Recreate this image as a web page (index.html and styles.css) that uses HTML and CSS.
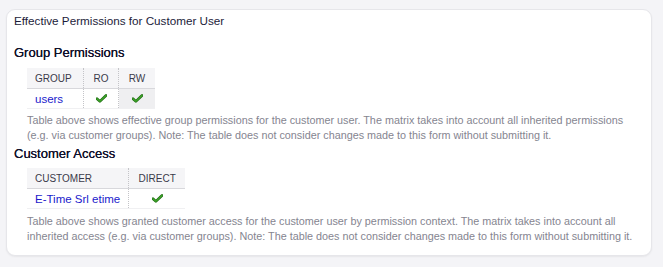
FILE: index.html
```html
<!DOCTYPE html>
<html>
<head>
<meta charset="utf-8">
<link rel="stylesheet" href="styles.css">
</head>
<body>
<div class="card">
  <div class="title">Effective Permissions for Customer User</div>
  <div class="section">
    <h3 class="heading first">Group Permissions</h3>
    <table class="matrix">
      <thead>
        <tr><th class="c-group">GROUP</th><th class="c-ro">RO</th><th class="c-rw">RW</th></tr>
      </thead>
      <tbody>
        <tr>
          <td class="name">users</td>
          <td class="chk"><svg class="tick" viewBox="0 0 12 10" width="11" height="9"><path d="M1 5.2 L4.2 8.2 L11 1.6" fill="none" stroke="#1e6b12" stroke-width="3" stroke-linecap="round" stroke-linejoin="round"/><path d="M1 5.2 L4.2 8.2 L11 1.6" fill="none" stroke="#3fa82b" stroke-width="1.4" stroke-linecap="round" stroke-linejoin="round"/></svg></td>
          <td class="chk shaded"><svg class="tick" viewBox="0 0 12 10" width="11" height="9"><path d="M1 5.2 L4.2 8.2 L11 1.6" fill="none" stroke="#1e6b12" stroke-width="3" stroke-linecap="round" stroke-linejoin="round"/><path d="M1 5.2 L4.2 8.2 L11 1.6" fill="none" stroke="#3fa82b" stroke-width="1.4" stroke-linecap="round" stroke-linejoin="round"/></svg></td>
        </tr>
      </tbody>
    </table>
    <p class="desc">Table above shows effective group permissions for the customer user. The matrix takes into account all inherited permissions (e.g. via customer groups). Note: The table does not consider changes made to this form without submitting it.</p>
  </div>
  <div class="section">
    <h3 class="heading second">Customer Access</h3>
    <table class="matrix">
      <thead>
        <tr><th class="c-cust">CUSTOMER</th><th class="c-direct">DIRECT</th></tr>
      </thead>
      <tbody>
        <tr>
          <td class="name">E-Time Srl etime</td>
          <td class="chk"><svg class="tick" viewBox="0 0 12 10" width="11" height="9"><path d="M1 5.2 L4.2 8.2 L11 1.6" fill="none" stroke="#1e6b12" stroke-width="3" stroke-linecap="round" stroke-linejoin="round"/><path d="M1 5.2 L4.2 8.2 L11 1.6" fill="none" stroke="#3fa82b" stroke-width="1.4" stroke-linecap="round" stroke-linejoin="round"/></svg></td>
        </tr>
      </tbody>
    </table>
    <p class="desc last">Table above shows granted customer access for the customer user by permission context. The matrix takes into account all inherited access (e.g. via customer groups). Note: The table does not consider changes made to this form without submitting it.</p>
  </div>
</div>
</body>
</html>
```

FILE: styles.css
```css
html, body {
  margin: 0;
  padding: 0;
  background: #f4f4f7;
}
body {
  padding: 9px 11px 13px 6px;
  font-family: "Liberation Sans", Arial, sans-serif;
  color: #1a1a2e;
}
.card {
  background: #fff;
  border: 1px solid #e6e6ea;
  border-radius: 9px;
  box-shadow: 0 1px 2px rgba(0,0,0,0.06);
  padding: 3px 7px 16px 7px;
  height: 226px;
}
.title {
  font-size: 11.7px;
  line-height: 15px;
  color: #1c1c3a;
}
.heading {
  font-size: 13px;
  line-height: 16px;
  font-weight: normal;
  color: #10102a;
  text-shadow: 0 0 0.3px #10102a;
}
.heading.first {
  margin: 17px 0 7px 0;
}
.heading.second {
  margin: 3px 0 6px 0;
}
.matrix {
  margin-left: 13px;
  border-collapse: collapse;
  font-size: 11px;
}
.matrix th {
  background: #f5f5f7;
  font-weight: normal;
  color: #3a3a4a;
  font-size: 10px;
  height: 20px;
  padding: 0 8px;
  text-align: center;
  border-bottom: 1px solid #d8d8dc;
  border-left: 1px dotted #c4c4c8;
  white-space: nowrap;
}
.matrix th:first-child,
.matrix td:first-child {
  border-left: none;
  text-align: left;
}
.matrix td {
  height: 19px;
  padding: 0 8px;
  text-align: center;
  border-left: 1px dotted #c4c4c8;
  border-bottom: 1px solid #f0f0f2;
  white-space: nowrap;
}
.matrix td.name {
  color: #1a1acc;
  font-size: 11.5px;
}
.matrix td.shaded {
  background: #efeff1;
}
.c-group { width: 40px; }
.c-ro { width: 18px; }
.c-rw { width: 20px; }
.c-cust { width: 84px; }
.c-direct { width: 40px; }
.tick {
  display: block;
  margin: 0 auto;
}
.desc {
  margin: 4px 6px 0 13px;
  font-size: 10.8px;
  line-height: 15px;
  color: #858590;
}
.desc.last {
  margin-top: 5px;
}
```
